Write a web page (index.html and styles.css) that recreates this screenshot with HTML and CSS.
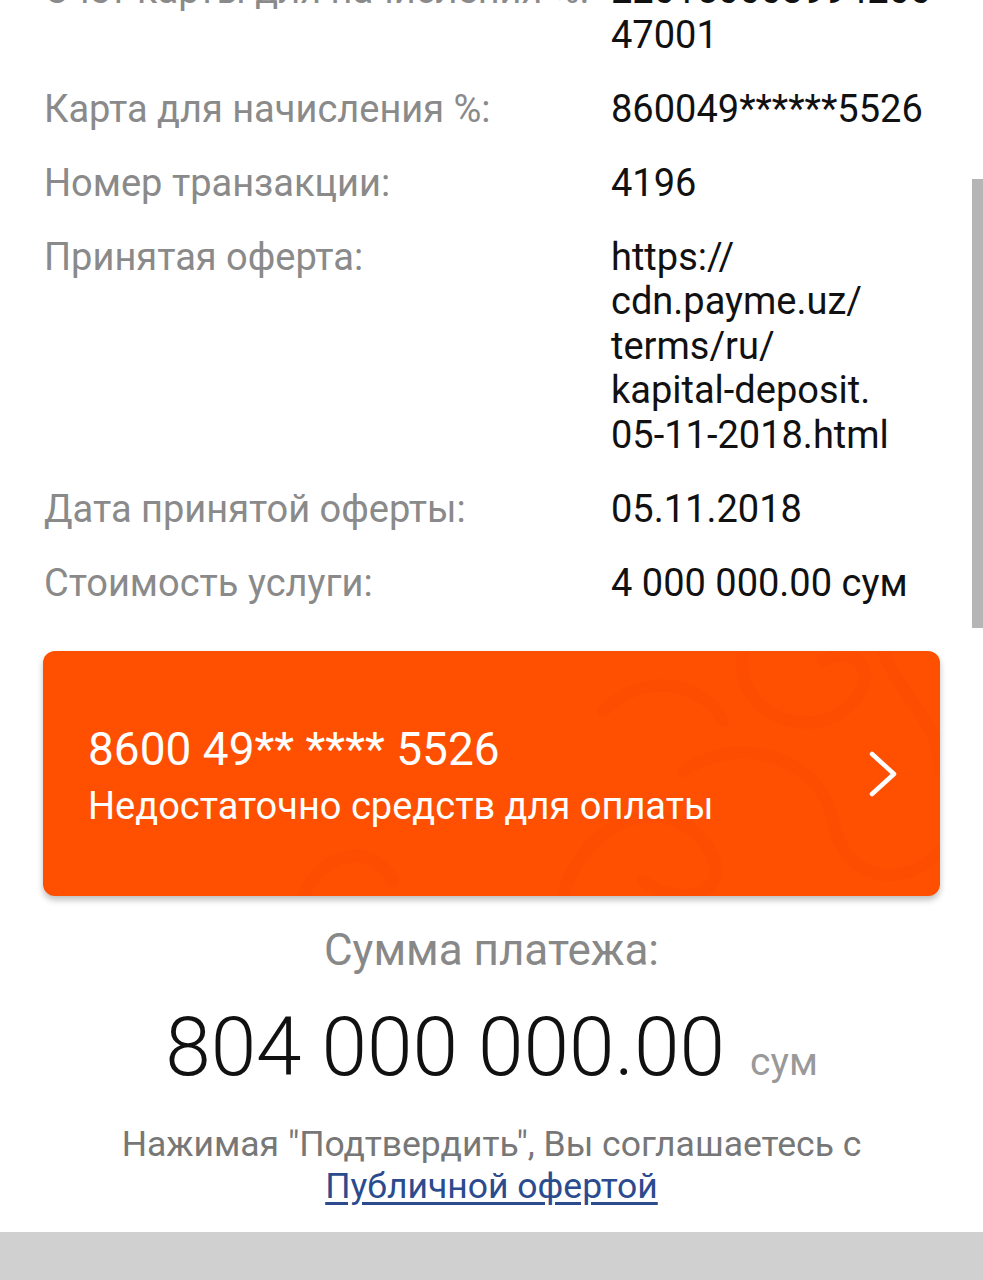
FILE: index.html
```html
<!DOCTYPE html>
<html lang="ru">
<head>
  <meta charset="UTF-8">
  <title>Подтверждение платежа</title>
  <meta name="viewport" content="width=device-width, initial-scale=1.0">
  <link rel="stylesheet" href="styles.css">
</head>
<body>

  <!-- Payment details -->
  <div class="details">
    <div class="row">
      <div class="label">Счет карты для начисления %:</div>
      <div class="value"><span class="seg">220150003994200</span><wbr><span class="seg">47001</span></div>
    </div>
    <div class="row">
      <div class="label">Карта для начисления %:</div>
      <div class="value">860049******5526</div>
    </div>
    <div class="row">
      <div class="label">Номер транзакции:</div>
      <div class="value">4196</div>
    </div>
    <div class="row">
      <div class="label">Принятая оферта:</div>
      <div class="value"><span class="seg">https://</span><wbr><span class="seg">cdn.payme.uz/</span><wbr><span class="seg">terms/ru/</span><wbr><span class="seg">kapital-deposit.</span><wbr><span class="seg">05-11-2018.html</span></div>
    </div>
    <div class="row">
      <div class="label">Дата принятой оферты:</div>
      <div class="value">05.11.2018</div>
    </div>
    <div class="row">
      <div class="label">Стоимость услуги:</div>
      <div class="value">4 000 000.00 сум</div>
    </div>
  </div>

  <!-- Selected card -->
  <div class="card">
    <svg class="card-pattern" viewBox="0 0 897 245" preserveAspectRatio="none">
      <path d="M520 245 C540 170 620 140 660 190 C700 240 640 260 600 230" />
      <path d="M700 0 C690 60 760 90 800 60 C840 30 820 -10 780 10" />
      <path d="M640 120 C700 80 780 110 790 170 C800 230 860 240 897 200" />
      <path d="M840 0 C860 50 897 70 897 120" />
      <path d="M560 60 C600 20 660 30 680 70" />
      <path d="M260 245 C280 200 330 190 350 230" />
    </svg>
    <div class="card-info">
      <div class="card-number">8600 49** **** 5526</div>
      <div class="card-status">Недостаточно средств для оплаты</div>
    </div>
    <svg class="chevron" width="32" height="48" viewBox="0 0 32 48">
      <path d="M5 4 L27 24 L5 44" />
    </svg>
  </div>

  <!-- Total -->
  <div class="total">
    <div class="total-label">Сумма платежа:</div>
    <div class="total-amount">804 000 000.00<span class="currency">сум</span></div>
  </div>

  <p class="terms">
    Нажимая "Подтвердить", Вы соглашаетесь с<br>
    <a href="#">Публичной офертой</a>
  </p>

  <div class="bottom-bar"></div>

  <!-- Overlay scrollbar -->
  <div class="scrollbar"></div>

</body>
</html>
```

FILE: styles.css
```css
/* Basic styling */
html, body {
  margin: 0;
  padding: 0;
}
body {
  font-family: Roboto, "Noto Sans", sans-serif;
  background-color: #fff;
  color: #111;
  width: 983px;
  height: 1280px;
  overflow: hidden;
  position: relative;
}

/* Detail rows */
.details {
  margin-top: -32px;
  padding: 0 40px 0 44px;
  display: flex;
  flex-direction: column;
  gap: 29.5px;
}
.row {
  display: grid;
  grid-template-columns: 567px 1fr;
  font-size: 38px;
  line-height: 44.5px;
}
.label {
  color: #8a8a8a;
  white-space: nowrap;
}
.value {
  color: #111;
}
.seg {
  white-space: nowrap;
}

/* Orange card */
.card {
  position: relative;
  margin: 46px 43px 0 43px;
  height: 245px;
  background-color: #ff4f00;
  border-radius: 12px;
  box-shadow: 0 4px 6px rgba(0, 0, 0, 0.25);
  display: flex;
  align-items: center;
  justify-content: space-between;
  padding: 0 41px 0 45px;
  box-sizing: border-box;
  overflow: hidden;
  color: #fff;
}
.card-pattern {
  position: absolute;
  top: 0;
  left: 0;
  width: 100%;
  height: 100%;
}
.card-pattern path {
  fill: none;
  stroke: #fc4d00;
  stroke-width: 12;
  stroke-linecap: round;
}
.card-info {
  position: relative;
  padding-top: 3px;
}
.card-number {
  font-size: 46px;
  line-height: 54px;
}
.card-status {
  font-size: 38px;
  line-height: 46px;
  margin-top: 7px;
}
.chevron {
  position: relative;
}
.chevron path {
  fill: none;
  stroke: #fff;
  stroke-width: 4.5;
  stroke-linecap: round;
  stroke-linejoin: round;
}

/* Total */
.total {
  text-align: center;
  margin-top: 26px;
}
.total-label {
  color: #888;
  font-size: 44px;
  line-height: 56px;
}
.total-amount {
  font-size: 82px;
  font-weight: 300;
  line-height: 100px;
  margin-top: 19px;
}
.currency {
  color: #999;
  font-size: 39px;
  font-weight: 400;
  margin-left: 25px;
}

/* Terms text */
.terms {
  margin: 11px 0 0 0;
  text-align: center;
  color: #777;
  font-size: 35.5px;
  line-height: 42px;
}
.terms a {
  color: #2b4b8e;
  text-decoration: underline;
  text-underline-offset: 4px;
}

.bottom-bar {
  position: absolute;
  left: 0;
  right: 0;
  bottom: 0;
  height: 48px;
  background-color: #d0d0d0;
}

.scrollbar {
  position: absolute;
  top: 179px;
  right: 0;
  width: 11px;
  height: 449px;
  background-color: #b5b5b5;
}
```
